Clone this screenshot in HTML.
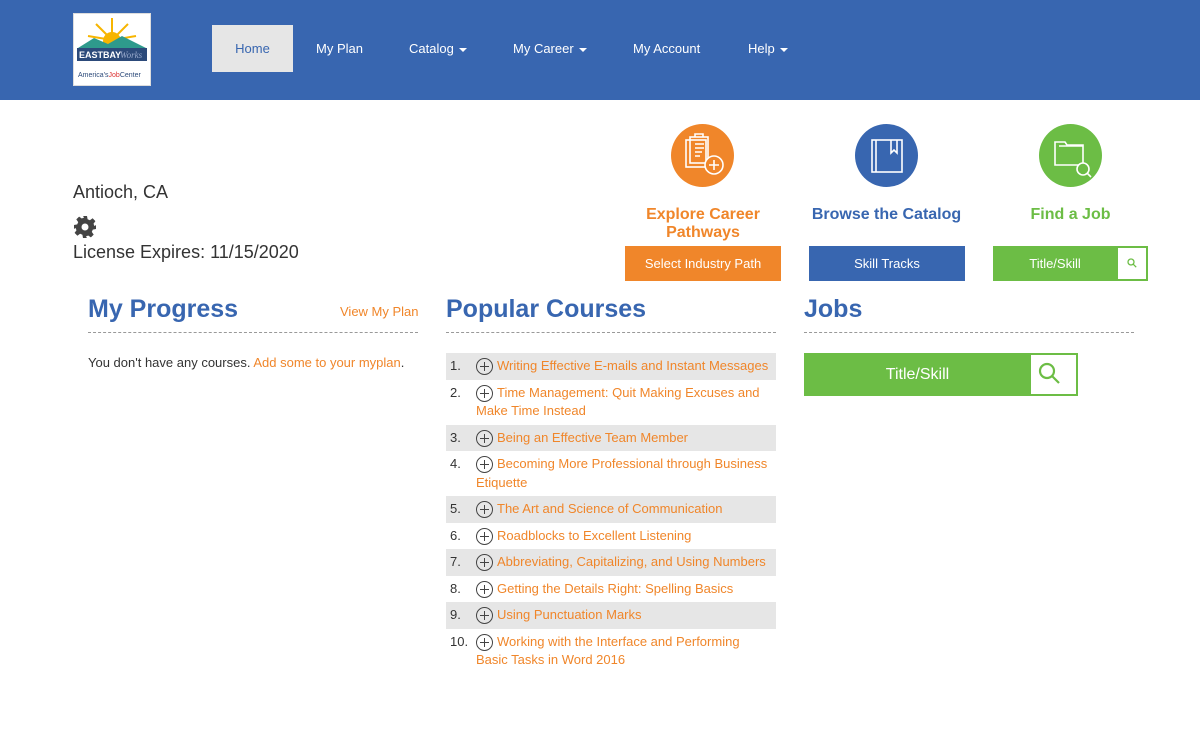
<!DOCTYPE html>
<html><head><style>
*{margin:0;padding:0;box-sizing:border-box}
body{width:1200px;height:730px;background:#fff;font-family:"Liberation Sans",sans-serif;position:relative;overflow:hidden;color:#333}
.hdr{position:absolute;left:0;top:0;width:1200px;height:100px;background:#3866b0}
.logo{position:absolute;left:73px;top:13px;width:78px;height:73px;background:#fff;border:1px solid #ddd}
.nav{position:absolute;top:25px;height:47px;line-height:47px;color:#fff;font-size:13px}
.home{left:212px;width:81px;background:#e6e6e6;color:#3866b0;text-align:center}
.car{display:inline-block;border-left:4px solid transparent;border-right:4px solid transparent;border-top:4px solid #fff;vertical-align:middle;margin-left:5px}
.abs{position:absolute}
.circ{position:absolute;top:124px;width:63px;height:63px;border-radius:50%}
.ttl{position:absolute;font-size:16px;font-weight:bold;text-align:center;line-height:18px}
.btn{position:absolute;top:246px;height:35px;line-height:35px;color:#fff;font-size:13px;text-align:center}
h2{position:absolute;font-size:25px;color:#3866b0;font-weight:bold;top:295px}
.hr{position:absolute;top:332px;height:0;border-top:1px dashed #999}
.or{color:#f0862a}
.list{position:absolute;left:446px;top:353px;width:330px;font-size:13px}
.row{padding:4px 0 4px 30px;line-height:18.5px;position:relative;color:#f0862a;text-indent:21px}
.row.g{background:#e6e6e6}
.row b{position:absolute;left:4px;top:4px;font-weight:normal;color:#333;text-indent:0}
.row i{position:absolute;left:30px;top:5px;width:17px;height:17px;border:1.2px solid #444;border-radius:50%;text-indent:0}
.row i:before{content:"";position:absolute;left:3px;top:7px;width:9px;height:1.2px;background:#444}
.row i:after{content:"";position:absolute;left:7px;top:3px;width:1.2px;height:9px;background:#444}
</style></head><body>
<div class="hdr">
<div class="logo">
<svg width="76" height="71" viewBox="0 0 76 71">
<g stroke="#f7b500" stroke-width="2">
<line x1="38" y1="26" x2="38" y2="4"/><line x1="38" y1="26" x2="22" y2="10"/><line x1="38" y1="26" x2="54" y2="10"/><line x1="38" y1="26" x2="14" y2="22"/><line x1="38" y1="26" x2="62" y2="22"/></g>
<circle cx="38" cy="27" r="9" fill="#f7b500"/>
<path d="M4 34 L20 24 L34 30 L48 22 L72 34 Z" fill="#2e9a8c"/>
<rect x="3" y="34" width="70" height="13" fill="#2c4a7a"/>
<text x="5" y="44" font-size="9" font-weight="bold" fill="#fff" font-family="Liberation Sans">EASTBAY</text>
<text x="46" y="44" font-size="9" font-style="italic" fill="#9ac" font-family="Liberation Serif">Works</text>
<text x="4" y="63" font-size="7" fill="#2c4a7a" font-family="Liberation Sans">America's<tspan fill="#d33">Job</tspan>Center</text>
</svg></div>
<div class="nav home">Home</div>
<div class="nav" style="left:316px">My Plan</div>
<div class="nav" style="left:409px">Catalog<span class="car"></span></div>
<div class="nav" style="left:513px">My Career<span class="car"></span></div>
<div class="nav" style="left:633px">My Account</div>
<div class="nav" style="left:748px">Help<span class="car"></span></div>
</div>

<div class="abs" style="left:73px;top:182px;font-size:18px">Antioch, CA</div>
<svg class="abs" style="left:73px;top:215px" width="24" height="24" viewBox="0 0 24 24"><path fill="#444" d="M10 1h4l.6 3.2 2.3 1 2.7-1.9 2.8 2.8-1.9 2.7 1 2.3L23 10v4l-3.2.6-1 2.3 1.9 2.7-2.8 2.8-2.7-1.9-2.3 1L14 23h-4l-.6-3.2-2.3-1-2.7 1.9-2.8-2.8 1.9-2.7-1-2.3L1 14v-4l3.2-.6 1-2.3-1.9-2.7 2.8-2.8 2.7 1.9 2.3-1z"/><circle cx="12" cy="12" r="3.5" fill="#fff"/></svg>
<div class="abs" style="left:73px;top:242px;font-size:18px">License Expires: 11/15/2020</div>

<div class="circ" style="left:671px;background:#f0862a"></div>
<svg class="abs" style="left:671px;top:124px" width="63" height="63" viewBox="0 0 63 63" fill="none" stroke="#fff" stroke-width="1.6"><rect x="15" y="16" width="20" height="27"/><rect x="19" y="13" width="18" height="26"/><path d="M24 13v-3h8v3M24 20h9M24 24h9M24 28h7M24 32h5"/><circle cx="43" cy="41" r="9" fill="#f0862a"/><path d="M43 36v10M38 41h10"/></svg>
<div class="circ" style="left:855px;background:#3866b0"></div>
<svg class="abs" style="left:855px;top:124px" width="63" height="63" viewBox="0 0 63 63" fill="none" stroke="#fff" stroke-width="1.6"><rect x="17" y="16" width="30" height="32"/><path d="M21 16v32M36 16v13l3-3 3 3V16"/></svg>
<div class="circ" style="left:1039px;background:#6cbd45"></div>
<svg class="abs" style="left:1039px;top:124px" width="63" height="63" viewBox="0 0 63 63" fill="none" stroke="#fff" stroke-width="1.6"><path d="M16 18h10l2 3h16v20H16z"/><path d="M20 22h24"/><circle cx="44" cy="45" r="6" fill="#6cbd45"/><path d="M48 49l4 4"/></svg>

<div class="ttl" style="left:625px;width:156px;top:206px;color:#f0862a">Explore Career<br>Pathways</div>
<div class="ttl" style="left:800px;width:173px;top:206px;color:#3866b0">Browse the Catalog</div>
<div class="ttl" style="left:993px;width:155px;top:206px;color:#6cbd45">Find a Job</div>
<div class="btn" style="left:625px;width:156px;background:#f0862a">Select Industry Path</div>
<div class="btn" style="left:809px;width:156px;background:#3866b0">Skill Tracks</div>
<div class="btn" style="left:993px;width:124px;background:#6cbd45">Title/Skill</div>
<div class="btn" style="left:1116px;width:32px;background:#fff;border:2px solid #6cbd45"></div>
<svg class="abs" style="left:1127px;top:258px" width="10" height="10" viewBox="0 0 10 10" fill="none" stroke="#6cbd45" stroke-width="1.3"><circle cx="4" cy="4" r="3"/><path d="M6.2 6.2l3 3"/></svg>

<h2 style="left:88px">My Progress</h2>
<div class="abs or" style="left:340px;top:304px;font-size:13px">View My Plan</div>
<div class="hr" style="left:88px;width:330px"></div>
<div class="abs" style="left:88px;top:355px;font-size:13px">You don't have any courses. <span class="or">Add some to your myplan</span>.</div>

<h2 style="left:446px">Popular Courses</h2>
<div class="hr" style="left:446px;width:330px"></div>
<div class="list">
<div class="row g"><b>1.</b><i></i>Writing Effective E-mails and Instant Messages</div>
<div class="row"><b>2.</b><i></i>Time Management: Quit Making Excuses and <span style="display:block;text-indent:0">Make Time Instead</span></div>
<div class="row g"><b>3.</b><i></i>Being an Effective Team Member</div>
<div class="row"><b>4.</b><i></i>Becoming More Professional through Business <span style="display:block;text-indent:0">Etiquette</span></div>
<div class="row g"><b>5.</b><i></i>The Art and Science of Communication</div>
<div class="row"><b>6.</b><i></i>Roadblocks to Excellent Listening</div>
<div class="row g"><b>7.</b><i></i>Abbreviating, Capitalizing, and Using Numbers</div>
<div class="row"><b>8.</b><i></i>Getting the Details Right: Spelling Basics</div>
<div class="row g"><b>9.</b><i></i>Using Punctuation Marks</div>
<div class="row"><b>10.</b><i></i>Working with the Interface and Performing <span style="display:block;text-indent:0">Basic Tasks in Word 2016</span></div>
</div>

<h2 style="left:804px">Jobs</h2>
<div class="hr" style="left:804px;width:330px"></div>
<div class="abs" style="left:804px;top:353px;width:227px;height:43px;line-height:43px;background:#6cbd45;color:#fff;text-align:center;font-size:16px">Title/Skill</div>
<div class="abs" style="left:1029px;top:353px;width:49px;height:43px;border:2px solid #6cbd45;background:#fff"></div>
<svg class="abs" style="left:1037px;top:361px" width="26" height="26" viewBox="0 0 26 26" fill="none" stroke="#6cbd45" stroke-width="2.2"><circle cx="10" cy="10" r="7"/><path d="M15 15l7 7"/></svg>
</body></html>
